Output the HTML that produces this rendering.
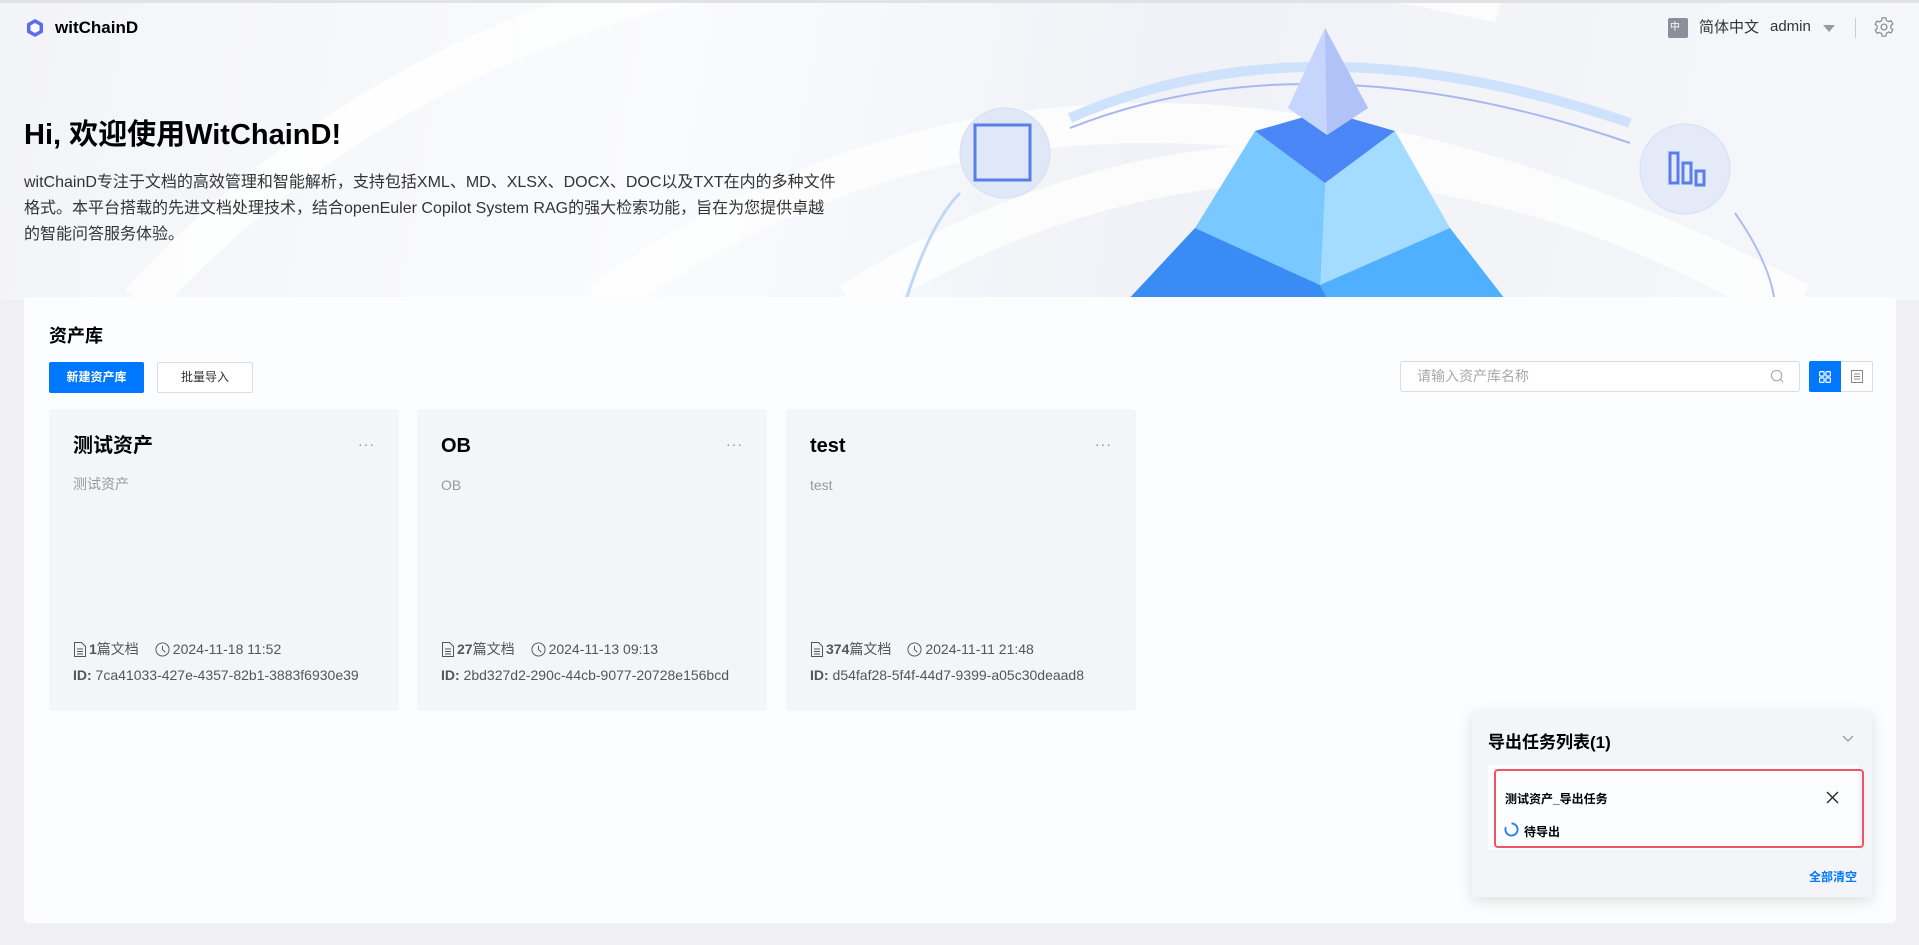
<!DOCTYPE html>
<html><head><meta charset="utf-8">
<style>
*{margin:0;padding:0;box-sizing:border-box}
body{width:1919px;height:945px;overflow:hidden;background:#f0f0f2;font-family:"Liberation Sans","Noto Sans CJK SC",sans-serif;color:#000;position:relative}
.banner{position:absolute;left:0;top:0;width:1919px;height:300px;background:linear-gradient(100deg,#f3f4f8 0%,#fafbfd 35%,#f0f2f7 60%,#f6f7fa 100%);border-top:3px solid #e2e2e4;overflow:hidden}
.abs{position:absolute}
.main{position:absolute;left:24px;top:297px;width:1872px;height:626px;background:#fcfdfe;border-radius:4px}
.card{position:absolute;top:409px;width:350px;height:302px;background:#f4f5f8;border-radius:4px}
.card .t{position:absolute;left:24px;top:26px;font-size:20px;font-weight:bold}
.card .d{position:absolute;left:24px;top:68px;font-size:14px;color:#999}
.card .m{position:absolute;left:24px;top:230px;font-size:14px;color:#555;display:flex;align-items:center;white-space:nowrap}
.card .id{position:absolute;left:24px;top:258px;font-size:14px;color:#555;white-space:nowrap}
.card .dots{position:absolute;right:24px;top:27px;color:#888;font-size:14px;letter-spacing:1px}
</style></head><body>
<div class="banner">
<svg class="abs" style="left:0;top:0" width="1919" height="300">
 <g fill="none" stroke="#ffffff" stroke-width="40" opacity=".8">
  <path d="M140 300 Q600 -200 1500 0"/>
  <path d="M600 300 Q1100 -60 1800 300"/>
  <path d="M850 300 Q1300 20 1780 300"/>
 </g>
 <path d="M1070 115 Q1310 10 1630 120" fill="none" stroke="#cfe2fb" stroke-width="10"/>
 <path d="M1070 125 Q1310 30 1630 140" fill="none" stroke="#a9b8f2" stroke-width="2"/>
 <path d="M1735 210 Q1770 260 1775 300" fill="none" stroke="#b0bcf2" stroke-width="2"/>
 <path d="M905 300 Q930 220 960 190" fill="none" stroke="#c0d8f8" stroke-width="3"/>
 <circle cx="1005" cy="150" r="45" fill="#e0e8f8" stroke="#d4def6"/>
 <circle cx="1685" cy="166" r="45" fill="#e4eaf8" stroke="#d4def6"/>
 <rect x="975" y="122" width="55" height="55" fill="none" stroke="#5a7ee8" stroke-width="3"/>
 <rect x="1670" y="150" width="8" height="30" fill="none" stroke="#5a7ee8" stroke-width="3"/>
 <rect x="1683" y="160" width="8" height="20" fill="none" stroke="#5a7ee8" stroke-width="3"/>
 <rect x="1696" y="168" width="8" height="14" fill="none" stroke="#5a7ee8" stroke-width="3"/>
 <polygon points="1125,300 1195,225 1320,282 1330,300" fill="#3a8cf5"/>
 <polygon points="1320,282 1450,225 1508,300 1330,300" fill="#4fb0ff"/>
 <polygon points="1195,225 1320,178 1450,225 1320,282" fill="#2f7ff0"/>
 <polygon points="1195,225 1255,128 1325,180 1320,282" fill="#79c8ff"/>
 <polygon points="1325,180 1395,128 1450,225 1320,282" fill="#a4dcff"/>
 <polygon points="1255,128 1325,108 1395,128 1325,180" fill="#4a86f6"/>
 <polygon points="1325,25 1288,105 1327,132 1368,105" fill="#c6d5fb"/>
 <polygon points="1325,25 1327,132 1368,105" fill="#b0c2f8"/>
</svg>
<div class="abs" style="left:26px;top:15px;width:18px;height:20px">
<svg width="18" height="20" viewBox="0 0 18 20"><polygon points="9,1 17,5.5 17,14.5 9,19 1,14.5 1,5.5" fill="#5b6cf3"/><polygon points="9,5 13.5,7.5 13.5,12.5 9,15 4.5,12.5 4.5,7.5" fill="#fff"/></svg></div>
<div class="abs" style="left:55px;top:15px;font-size:17px;font-weight:bold">witChainD</div>
<div class="abs" style="left:1668px;top:15px;width:20px;height:20px;background:#8a8f99;border-radius:2px;color:#fff;font-size:10px;line-height:20px;padding-left:2px">中</div>
<div class="abs" style="left:1699px;top:13px;font-size:15px;color:#333">简体中文</div>
<div class="abs" style="left:1770px;top:15px;font-size:15px;color:#333">admin</div>
<div class="abs" style="left:1823px;top:22px;width:0;height:0;border-left:6px solid transparent;border-right:6px solid transparent;border-top:7px solid #999"></div>
<div class="abs" style="left:1855px;top:15px;width:1px;height:20px;background:#ccc"></div>
<svg class="abs" style="left:1873px;top:13px" width="22" height="22" viewBox="0 0 24 24" fill="none" stroke="#888" stroke-width="1.3"><circle cx="12" cy="12" r="3.2"/><path d="M10 2h4l.6 2.8 2.3 1.3 2.7-.9 2 3.4-2.1 1.9v2.6l2.1 1.9-2 3.4-2.7-.9-2.3 1.3L14 22h-4l-.6-2.8-2.3-1.3-2.7.9-2-3.4 2.1-1.9v-2.6L2.4 9l2-3.4 2.7.9 2.3-1.3z"/></svg>
<div class="abs" style="left:24px;top:108px;font-size:29px;font-weight:bold">Hi, 欢迎使用WitChainD!</div>
<div class="abs" style="left:24px;top:167px;width:812px;font-size:16px;line-height:26px;color:#333">witChainD专注于文档的高效管理和智能解析，支持包括XML、MD、XLSX、DOCX、DOC以及TXT在内的多种文件格式。本平台搭载的先进文档处理技术，结合openEuler Copilot System RAG的强大检索功能，旨在为您提供卓越的智能问答服务体验。</div>
</div>

<div class="main"></div>
<div class="abs" style="left:49px;top:322px;font-size:18px;font-weight:bold">资产库</div>
<div class="abs" style="left:49px;top:362px;width:95px;height:31px;background:#0077ff;border-radius:2px;color:#fff;font-size:12px;font-weight:bold;text-align:center;line-height:31px">新建资产库</div>
<div class="abs" style="left:157px;top:362px;width:96px;height:31px;border:1px solid #ddd;border-radius:2px;background:#fff;color:#333;font-size:12px;text-align:center;line-height:29px">批量导入</div>
<div class="abs" style="left:1400px;top:361px;width:400px;height:31px;border:1px solid #dcdde2;border-radius:3px;background:#fff;font-size:14px;color:#a8a8ad;padding-left:16px;line-height:29px">请输入资产库名称</div>
<svg class="abs" style="left:1770px;top:369px" width="15" height="15" viewBox="0 0 16 16" fill="none" stroke="#aaa" stroke-width="1.2"><circle cx="7" cy="7" r="5.5"/><path d="M11 11l3 3"/></svg>
<div class="abs" style="left:1809px;top:361px;width:32px;height:31px;background:#0077ff;border-radius:2px 0 0 2px"></div>
<svg class="abs" style="left:1819px;top:371px" width="12" height="12" viewBox="0 0 12 12" fill="none" stroke="#fff" stroke-width="1.2"><rect x=".6" y=".6" width="4.5" height="4.5" rx="1"/><rect x="6.9" y=".6" width="4.5" height="4.5" rx="1"/><rect x=".6" y="6.9" width="4.5" height="4.5" rx="1"/><rect x="6.9" y="6.9" width="4.5" height="4.5" rx="1"/></svg>
<div class="abs" style="left:1841px;top:361px;width:32px;height:31px;border:1px solid #dcdde2;border-left:none;border-radius:0 2px 2px 0;background:#fff"></div>
<svg class="abs" style="left:1851px;top:370px" width="12" height="13" viewBox="0 0 12 13" fill="none" stroke="#888" stroke-width="1"><rect x=".5" y=".5" width="11" height="12"/><path d="M3 4h6M3 6.5h6M3 9h6"/></svg>

<div class="card" style="left:49px"><div class="t" style="top:20px">测试资产</div><div class="dots">···</div><div class="d" style="top:65px">测试资产</div>
<div class="m"><svg width="14" height="15" viewBox="0 0 14 15" fill="none" stroke="#555"><path d="M1.5 .5h7l4 4v10h-11z"/><path d="M4 7h6M4 9.5h6M4 12h6"/></svg><b style="margin-left:2px">1</b>篇文档<svg style="margin-left:16px;margin-right:3px" width="15" height="15" viewBox="0 0 16 16" fill="none" stroke="#555"><circle cx="8" cy="8" r="7"/><path d="M8 4v4l3 3"/></svg>2024-11-18 11:52</div>
<div class="id"><b>ID:</b> 7ca41033-427e-4357-82b1-3883f6930e39</div></div>

<div class="card" style="left:417px"><div class="t">OB</div><div class="dots">···</div><div class="d">OB</div>
<div class="m"><svg width="14" height="15" viewBox="0 0 14 15" fill="none" stroke="#555"><path d="M1.5 .5h7l4 4v10h-11z"/><path d="M4 7h6M4 9.5h6M4 12h6"/></svg><b style="margin-left:2px">27</b>篇文档<svg style="margin-left:16px;margin-right:3px" width="15" height="15" viewBox="0 0 16 16" fill="none" stroke="#555"><circle cx="8" cy="8" r="7"/><path d="M8 4v4l3 3"/></svg>2024-11-13 09:13</div>
<div class="id"><b>ID:</b> 2bd327d2-290c-44cb-9077-20728e156bcd</div></div>

<div class="card" style="left:786px"><div class="t">test</div><div class="dots">···</div><div class="d">test</div>
<div class="m"><svg width="14" height="15" viewBox="0 0 14 15" fill="none" stroke="#555"><path d="M1.5 .5h7l4 4v10h-11z"/><path d="M4 7h6M4 9.5h6M4 12h6"/></svg><b style="margin-left:2px">374</b>篇文档<svg style="margin-left:16px;margin-right:3px" width="15" height="15" viewBox="0 0 16 16" fill="none" stroke="#555"><circle cx="8" cy="8" r="7"/><path d="M8 4v4l3 3"/></svg>2024-11-11 21:48</div>
<div class="id"><b>ID:</b> d54faf28-5f4f-44d7-9399-a05c30deaad8</div></div>

<div class="abs" style="left:1472px;top:711px;width:400px;height:186px;background:#f4f5f8;border-radius:4px;box-shadow:0 4px 14px rgba(0,0,0,.12)"></div>
<div class="abs" style="left:1488px;top:728px;font-size:17px;font-weight:bold">导出任务列表(1)</div>
<svg class="abs" style="left:1842px;top:735px" width="12" height="8" viewBox="0 0 12 8" fill="none" stroke="#888"><path d="M1 1l5 5 5-5"/></svg>
<div class="abs" style="left:1488px;top:765px;width:370px;height:85px;background:#fcfdfe"></div>
<div class="abs" style="left:1494px;top:769px;width:370px;height:79px;border:2.5px solid #f25467;border-radius:4px"></div>
<div class="abs" style="left:1505px;top:790px;font-size:12px;font-weight:bold">测试资产_导出任务</div>
<svg class="abs" style="left:1826px;top:791px" width="13" height="13" viewBox="0 0 13 13" stroke="#222" stroke-width="1.3"><path d="M1 1l11 11M12 1L1 12"/></svg>
<svg class="abs" style="left:1504px;top:822px" width="15" height="15" viewBox="0 0 16 16" fill="none" stroke="#2a7df0" stroke-width="2"><path d="M8 1.5A6.5 6.5 0 1 1 2 5.5"/></svg>
<div class="abs" style="left:1524px;top:823px;font-size:12px;font-weight:bold">待导出</div>
<div class="abs" style="left:1809px;top:868px;font-size:12px;font-weight:bold;color:#0077ff">全部清空</div>
</body></html>
